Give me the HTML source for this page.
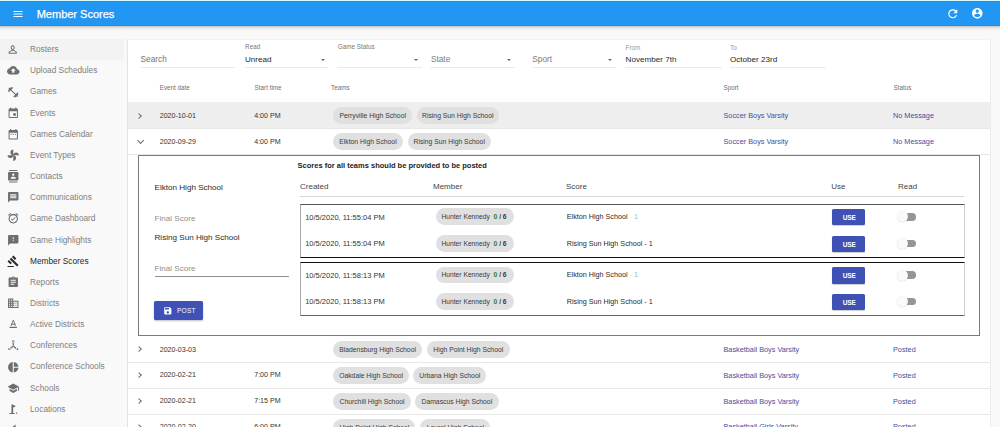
<!DOCTYPE html>
<html><head><meta charset="utf-8">
<style>
*{box-sizing:border-box;margin:0;padding:0}
html,body{width:1000px;height:427px;overflow:hidden;background:#f9f9f9;font-family:"Liberation Sans",sans-serif;position:relative}
.t{position:absolute;white-space:nowrap;line-height:1}
.abs{position:absolute}
#topline{position:absolute;left:0;top:0;width:1000px;height:1px;background:#d2fbff}
#topline2{position:absolute;left:0;top:1px;width:1000px;height:1px;background:#2f8ad6;z-index:6}
#bar{position:absolute;left:0;top:1px;width:1000px;height:25px;background:#2196f3;border-bottom:1px solid #2a89d2;z-index:5}
#shadow{position:absolute;left:0;top:26px;width:1000px;height:6px;background:linear-gradient(to bottom,rgba(0,0,0,.22),rgba(0,0,0,.1) 25%,rgba(0,0,0,.04) 50%,rgba(0,0,0,.01) 75%,rgba(0,0,0,0));z-index:5}
#side{position:absolute;left:0;top:26px;width:124px;height:401px;background:#f9f9f9}
.si{position:absolute;left:0;width:124px;height:21.15px}
.si .ic{position:absolute;left:7.3px;width:12.5px;height:12.5px}
.si .ic svg{width:100%;height:100%;fill:#6e6e6e;display:block}
.si span{}
#card{position:absolute;left:127px;top:39px;width:863.5px;height:400px;background:#fff;border-left:1px solid #e3e3e3;border-right:1px solid #ececec;border-top:1px solid #f3f3f3}
.uline{position:absolute;height:1px;background:#dcdcdc}
.arrow{position:absolute;width:0;height:0;border-left:2.75px solid transparent;border-right:2.75px solid transparent;border-top:2.75px solid #666}
.chip{position:absolute;height:17px;border-radius:8.5px;background:#e0e0e0;font-size:6.8px;line-height:17px;color:#3a3a3a;white-space:nowrap;text-align:center}
.chev{position:absolute;width:4.2px;height:4.2px;border-right:1.1px solid #6a6a6a;border-bottom:1.1px solid #6a6a6a}
</style></head><body>
<div id="topline"></div><div id="topline2"></div><div id="shadow"></div>
<div id="bar">
  <svg class="abs" style="left:11.5px;top:7px;width:12px;height:12px" viewBox="0 0 24 24"><path fill="#fff" d="M3 18h18v-2H3v2zm0-5h18v-2H3v2zm0-7v2h18V6H3z"/></svg>
  <div class="t" style="left:36.7px;top:8px;font-size:11px;color:#fff;-webkit-text-stroke:0.25px #fff">Member Scores</div>
  <svg class="abs" style="left:945.6px;top:5.7px;width:13.5px;height:13.5px" viewBox="0 0 24 24"><path fill="#fff" d="M17.65 6.35C16.2 4.9 14.21 4 12 4c-4.42 0-7.990 3.58-7.99 8s3.57 8 7.99 8c3.73 0 6.84-2.55 7.73-6h-2.08c-.82 2.33-3.04 4-5.65 4-3.31 0-6-2.69-6-6s2.69-6 6-6c1.66 0 3.14.69 4.22 1.78L13 11h7V4l-2.35 2.35z"/></svg>
  <svg class="abs" style="left:970.9px;top:5.8px;width:12.6px;height:12.6px" viewBox="0 0 24 24"><path fill="#fff" d="M12 2C6.48 2 2 6.48 2 12s4.48 10 10 10 10-4.48 10-10S17.52 2 12 2zm0 3c1.66 0 3 1.34 3 3s-1.34 3-3 3-3-1.34-3-3 1.34-3 3-3zm0 14.2c-2.5 0-4.71-1.280-6-3.22.03-1.99 4-3.08 6-3.08 1.99 0 5.970 1.09 6 3.08-1.29 1.94-3.5 3.22-6 3.22z"/></svg>
</div>
<div id="side">
<div class="si" style="top:12.50px;background:#f3f3f3;"><div class="ic" style="top:4.8px"><svg viewBox="0 0 24 24"><path fill-rule="evenodd" d="M11 4.3a3.9 4.5 0 1 0 0.001 0z M11 6.2a2.0 2.6 0 1 1 -0.001 0z M9 13.3H13L18.8 17V20.4H3.2V17Z M9.6 15.1L5 17.8V18.6H17V17.8L12.4 15.1Z"/></svg></div></div>
<div class="si" style="top:33.65px;"><div class="ic" style="top:4.8px"><svg viewBox="0 0 24 24"><path fill-rule="evenodd" d="M19.35 10.04C18.67 6.59 15.64 4 12 4 9.11 4 6.6 5.64 5.35 8.04 2.34 8.36 0 10.91 0 14c0 3.31 2.69 6 6 6h13c2.76 0 5-2.24 5-5 0-2.64-2.05-4.78-4.65-4.96zM14 13v4h-4v-4H7l5-5 5 5h-3z"/></svg></div></div>
<div class="si" style="top:54.80px;"><div class="ic" style="top:4.8px"><svg viewBox="0 0 24 24"><path fill-rule="evenodd" d="M20.57 14.86L22 13.43 20.57 12 17 15.57 8.43 7 12 3.43 10.57 2 9.14 3.43 7.71 2 5.57 4.14 4.14 2.71 2.71 4.14l1.43 1.43L2 7.71l1.43 1.43L2 10.57 3.43 12 7 8.43 15.57 17 12 20.57 13.43 22l1.43-1.43L16.29 22l2.14-2.14 1.43 1.43 1.43-1.43-1.43-1.43L22 16.29z"/></svg></div></div>
<div class="si" style="top:75.95px;"><div class="ic" style="top:4.8px"><svg viewBox="0 0 24 24"><path fill-rule="evenodd" d="M17 12h-5v5h5v-5zM16 1v2H8V1H6v2H5c-1.11 0-1.99.9-1.99 2L3 19c0 1.1.89 2 2 2h14c1.1 0 2-.9 2-2V5c0-1.1-.9-2-2-2h-1V1h-2zm3 18H5V8h14v11z"/></svg></div></div>
<div class="si" style="top:97.10px;"><div class="ic" style="top:4.8px"><svg viewBox="0 0 24 24"><path fill-rule="evenodd" d="M9 11H7v2h2v-2zm4 0h-2v2h2v-2zm4 0h-2v2h2v-2zm2-7h-1V2h-2v2H8V2H6v2H5c-1.11 0-1.99.9-1.99 2L3 20c0 1.1.89 2 2 2h14c1.1 0 2-.9 2-2V6c0-1.1-.9-2-2-2zm0 16H5V9h14v11z"/></svg></div></div>
<div class="si" style="top:118.25px;"><div class="ic" style="top:4.8px"><svg viewBox="0 0 24 24"><path fill-rule="evenodd" d="M12 12c0-3 2.5-5.5 5.5-5.5S23 9 23 12H12zm0 0c0 3-2.5 5.5-5.5 5.5S1 15 1 12h11zm0 0c-3 0-5.5-2.5-5.5-5.5S9 1 12 1v11zm0 0c3 0 5.5 2.5 5.5 5.5S15 23 12 23V12z"/></svg></div></div>
<div class="si" style="top:139.40px;"><div class="ic" style="top:4.8px"><svg viewBox="0 0 24 24"><path fill-rule="evenodd" d="M20 0H4v2h16V0zM4 24h16v-2H4v2zM20 4H4c-1.1 0-2 .9-2 2v12c0 1.1.9 2 2 2h16c1.1 0 2-.9 2-2V6c0-1.1-.9-2-2-2zm-8 2.75c1.24 0 2.25 1.01 2.25 2.25s-1.01 2.25-2.25 2.25S9.75 10.24 9.75 9 10.76 6.75 12 6.75zM17 17H7v-1.5c0-1.67 3.33-2.5 5-2.5s5 .83 5 2.5V17z"/></svg></div></div>
<div class="si" style="top:160.55px;"><div class="ic" style="top:4.8px"><svg viewBox="0 0 24 24"><path fill-rule="evenodd" d="M20 2H4c-1.1 0-1.99.9-1.99 2L2 22l4-4h14c1.1 0 2-.9 2-2V4c0-1.1-.9-2-2-2zm-2 12H6v-2h12v2zm0-3H6V9h12v2zm0-3H6V6h12v2z"/></svg></div></div>
<div class="si" style="top:181.70px;"><div class="ic" style="top:4.8px"><svg viewBox="0 0 24 24"><path fill-rule="evenodd" d="M22 5.72l-4.6-3.86-1.29 1.53 4.6 3.86L22 5.72zM7.88 3.39L6.6 1.86 2 5.71l1.29 1.53 4.59-3.85zM12 4c-4.97 0-9 4.03-9 9s4.02 9 9 9c4.97 0 9-4.03 9-9s-4.03-9-9-9zm0 16c-3.87 0-7-3.13-7-7s3.13-7 7-7 7 3.13 7 7-3.13 7-7 7zm-1.46-5.47L8.41 12.4l-1.06 1.06 3.18 3.18 6-6-1.06-1.06-4.93 4.95z"/></svg></div></div>
<div class="si" style="top:202.85px;"><div class="ic" style="top:4.8px"><svg viewBox="0 0 24 24"><path fill-rule="evenodd" d="M20 2H4c-1.1 0-1.99.9-1.99 2L2 22l4-4h14c1.1 0 2-.9 2-2V4c0-1.1-.9-2-2-2zm-7 12h-2v-2h2v2zm0-4h-2V6h2v4z"/></svg></div></div>
<div class="si" style="top:224.00px;"><div class="ic" style="top:4.8px"><svg viewBox="0 0 24 24" style="fill:#2a2a2a"><path fill-rule="evenodd" d="M1 21h12v2H1zM5.245 8.07l2.83-2.827 14.14 14.142-2.828 2.828zM12.317 1l5.657 5.656-2.83 2.83-5.654-5.66zM3.825 9.485l5.657 5.657-2.828 2.828-5.657-5.657z"/></svg></div></div>
<div class="si" style="top:245.15px;"><div class="ic" style="top:4.8px"><svg viewBox="0 0 24 24"><path fill-rule="evenodd" d="M19 3h-4.18C14.4 1.84 13.3 1 12 1c-1.3 0-2.4.84-2.82 2H5c-1.1 0-2 .9-2 2v14c0 1.1.9 2 2 2h14c1.1 0 2-.9 2-2V5c0-1.1-.9-2-2-2zm-7 0c.55 0 1 .45 1 1s-.45 1-1 1-1-.45-1-1 .45-1 1-1zm2 14H7v-2h7v2zm3-4H7v-2h10v2zm0-4H7V7h10v2z"/></svg></div></div>
<div class="si" style="top:266.30px;"><div class="ic" style="top:4.8px"><svg viewBox="0 0 24 24"><path fill-rule="evenodd" d="M12 7V3H2v18h20V7H12zM6 19H4v-2h2v2zm0-4H4v-2h2v2zm0-4H4V9h2v2zm0-4H4V5h2v2zm4 12H8v-2h2v2zm0-4H8v-2h2v2zm0-4H8V9h2v2zm0-4H8V5h2v2zm10 12h-8v-2h2v-2h-2v-2h2v-2h-2V9h8v10zm-2-8h-2v2h2v-2zm0 4h-2v2h2v-2z"/></svg></div></div>
<div class="si" style="top:287.45px;"><div class="ic" style="top:4.8px"><svg viewBox="0 0 24 24"><path fill-rule="evenodd" d="M5 17v2h14v-2H5zm4.5-4.2h5l.9 2.2h2.1L12.75 4h-1.5L6.5 15h2.1l.9-2.2zM12 5.98L13.87 11h-3.74L12 5.98z"/></svg></div></div>
<div class="si" style="top:308.60px;"><div class="ic" style="top:4.8px"><svg viewBox="0 0 24 24"><path fill-rule="evenodd" d="M10.8 5h2.4v8.5h-2.4z M11.2 12.4l1.6 1.8-7.4 6.2-1.6-1.8z M12.8 12.4l-1.6 1.8 7.4 6.2 1.6-1.8z M2.6 17.2h4.2v4h-4.2z M17.2 17.2h4.2v4h-4.2z M9.9 3h4.2v4h-4.2z"/></svg></div></div>
<div class="si" style="top:329.75px;"><div class="ic" style="top:4.8px"><svg viewBox="0 0 24 24"><path fill-rule="evenodd" d="M11 2v20c-5.07-.5-9-4.79-9-10s3.93-9.5 9-10zm2.03 0v8.99H22c-.47-4.74-4.24-8.52-8.97-8.99zm0 11.01V22c4.74-.47 8.5-4.25 8.97-8.99h-8.97z"/></svg></div></div>
<div class="si" style="top:350.90px;"><div class="ic" style="top:4.8px"><svg viewBox="0 0 24 24"><path fill-rule="evenodd" d="M5 13.18v4L12 21l7-3.82v-4L12 17l-7-3.82zM12 3L1 9l11 6 9-4.91V17h2V9L12 3z"/></svg></div></div>
<div class="si" style="top:372.05px;"><div class="ic" style="top:4.8px"><svg viewBox="0 0 24 24"><path fill-rule="evenodd" d="M8.5 3h2.6l6 3-5.2 2.6V19h-3.4z M4.5 19h10v2.2h-10z M17.2 18.3h2.4v2.4h-2.4z"/></svg></div></div>
<div class="si" style="top:393.20px;"><div class="ic" style="top:4.8px"><svg viewBox="0 0 24 24"><path fill-rule="evenodd" d="M11 5.5l5.5-4.5v6h-5.5z"/></svg></div></div>
</div>
<div id="card"></div>
<div class="t" style="left:30px;top:45px;font-size:8.3px;color:#808080;">Rosters</div>
<div class="t" style="left:30px;top:66px;font-size:8.3px;color:#808080;">Upload Schedules</div>
<div class="t" style="left:30px;top:87px;font-size:8.3px;color:#808080;">Games</div>
<div class="t" style="left:30px;top:109px;font-size:8.3px;color:#808080;">Events</div>
<div class="t" style="left:30px;top:130px;font-size:8.3px;color:#808080;">Games Calendar</div>
<div class="t" style="left:30px;top:151px;font-size:8.3px;color:#808080;">Event Types</div>
<div class="t" style="left:30px;top:172px;font-size:8.3px;color:#808080;">Contacts</div>
<div class="t" style="left:30px;top:193px;font-size:8.3px;color:#808080;">Communications</div>
<div class="t" style="left:30px;top:214px;font-size:8.3px;color:#808080;">Game Dashboard</div>
<div class="t" style="left:30px;top:236px;font-size:8.3px;color:#808080;">Game Highlights</div>
<div class="t" style="left:30px;top:257px;font-size:8.3px;color:#262626;">Member Scores</div>
<div class="t" style="left:30px;top:278px;font-size:8.3px;color:#808080;">Reports</div>
<div class="t" style="left:30px;top:299px;font-size:8.3px;color:#808080;">Districts</div>
<div class="t" style="left:30px;top:320px;font-size:8.3px;color:#808080;">Active Districts</div>
<div class="t" style="left:30px;top:341px;font-size:8.3px;color:#808080;">Conferences</div>
<div class="t" style="left:30px;top:362px;font-size:8.3px;color:#808080;">Conference Schools</div>
<div class="t" style="left:30px;top:384px;font-size:8.3px;color:#808080;">Schools</div>
<div class="t" style="left:30px;top:405px;font-size:8.3px;color:#808080;">Locations</div>
<div class="t" style="left:140.5px;top:55px;font-size:8.3px;color:#737373;">Search</div>
<div class="abs" style="left:140px;top:67px;width:95.0px;height:1px;background:#ebebeb"></div>
<div class="t" style="left:245.1px;top:44px;font-size:6.3px;color:#777;">Read</div>
<div class="t" style="left:245px;top:56px;font-size:8.1px;color:#262626;">Unread</div>
<div class="arrow" style="left:321.15px;top:59.20px"></div>
<div class="abs" style="left:245px;top:67px;width:82.5px;height:1px;background:#ebebeb"></div>
<div class="t" style="left:337.8px;top:44px;font-size:6.3px;color:#777;">Game Status</div>
<div class="arrow" style="left:414.25px;top:59.20px"></div>
<div class="abs" style="left:337px;top:67px;width:85.0px;height:1px;background:#ebebeb"></div>
<div class="t" style="left:430.9px;top:55px;font-size:8.3px;color:#7c7c7c;">State</div>
<div class="arrow" style="left:507.05px;top:59.20px"></div>
<div class="abs" style="left:430px;top:67px;width:84.6px;height:1px;background:#ebebeb"></div>
<div class="t" style="left:532.3px;top:55px;font-size:8.3px;color:#7c7c7c;">Sport</div>
<div class="arrow" style="left:607.95px;top:59.20px"></div>
<div class="abs" style="left:532px;top:67px;width:83.5px;height:1px;background:#ebebeb"></div>
<div class="t" style="left:625.6px;top:45px;font-size:6.3px;color:#999;">From</div>
<div class="t" style="left:625.6px;top:56px;font-size:8.1px;color:#262a3a;">November 7th</div>
<div class="abs" style="left:625px;top:67px;width:96.5px;height:1px;background:#ebebeb"></div>
<div class="t" style="left:730px;top:45px;font-size:6.3px;color:#999;">To</div>
<div class="t" style="left:730px;top:56px;font-size:8.1px;color:#262626;">October 23rd</div>
<div class="abs" style="left:730px;top:67px;width:96.0px;height:1px;background:#ebebeb"></div>
<div class="t" style="left:159.7px;top:85px;font-size:6.3px;color:#707070;">Event date</div>
<div class="t" style="left:254.6px;top:85px;font-size:6.3px;color:#707070;">Start time</div>
<div class="t" style="left:331.1px;top:85px;font-size:6.3px;color:#707070;">Teams</div>
<div class="t" style="left:723.5px;top:85px;font-size:6.3px;color:#707070;">Sport</div>
<div class="t" style="left:893.5px;top:85px;font-size:6.3px;color:#707070;">Status</div>
<div class="abs" style="left:127.5px;top:102px;width:862.5px;height:26px;background:#eeeeee"></div>
<div class="chev" style="left:137.2px;top:114.05px;transform:rotate(-45deg)"></div>
<div class="t" style="left:159.7px;top:113px;font-size:7.1px;color:#333;">2020-10-01</div>
<div class="t" style="left:254.2px;top:113px;font-size:7.1px;color:#333;">4:00 PM</div>
<div class="chip" style="left:333.1px;top:107.20px;width:79.2px">Perryville High School</div>
<div class="chip" style="left:416.8px;top:107.20px;width:81.9px">Rising Sun High School</div>
<div class="t" style="left:723.5px;top:112px;font-size:7.3px;color:#4350a0;">Soccer Boys Varsity</div>
<div class="t" style="left:893px;top:112px;font-size:7.3px;color:#4350a0;">No Message</div>
<div class="abs" style="left:127.5px;top:128px;width:862.5px;height:1px;background:#e8e8e8"></div>
<div class="chev" style="left:137.75px;top:138.30px;width:5.2px;height:5.2px;transform:rotate(45deg)"></div>
<div class="t" style="left:159.7px;top:139px;font-size:7.1px;color:#333;">2020-09-29</div>
<div class="t" style="left:254.2px;top:139px;font-size:7.1px;color:#333;">4:00 PM</div>
<div class="chip" style="left:333.1px;top:133.25px;width:69.7px">Elkton High School</div>
<div class="chip" style="left:407.8px;top:133.25px;width:82.8px">Rising Sun High School</div>
<div class="t" style="left:723.5px;top:138px;font-size:7.3px;color:#4350a0;">Soccer Boys Varsity</div>
<div class="t" style="left:893px;top:138px;font-size:7.3px;color:#4350a0;">No Message</div>
<div class="abs" style="left:127.5px;top:154px;width:862.5px;height:1px;background:#e8e8e8"></div>
<div class="chev" style="left:137.2px;top:347.25px;transform:rotate(-45deg)"></div>
<div class="t" style="left:159.7px;top:347px;font-size:7.1px;color:#333;">2020-03-03</div>
<div class="chip" style="left:333.2px;top:341.00px;width:88.8px">Bladensburg High School</div>
<div class="chip" style="left:426.7px;top:341.00px;width:83.2px">High Point High School</div>
<div class="t" style="left:723.5px;top:346px;font-size:7.3px;color:#4350a0;">Basketball Boys Varsity</div>
<div class="t" style="left:893px;top:346px;font-size:7.3px;color:#4350a0;">Posted</div>
<div class="abs" style="left:127.5px;top:362px;width:862.5px;height:1px;background:#e8e8e8"></div>
<div class="chev" style="left:137.2px;top:373.15px;transform:rotate(-45deg)"></div>
<div class="t" style="left:159.7px;top:372px;font-size:7.1px;color:#333;">2020-02-21</div>
<div class="t" style="left:254.2px;top:372px;font-size:7.1px;color:#333;">7:00 PM</div>
<div class="chip" style="left:333.2px;top:367.10px;width:75.8px">Oakdale High School</div>
<div class="chip" style="left:413.4px;top:367.10px;width:72.8px">Urbana High School</div>
<div class="t" style="left:723.5px;top:372px;font-size:7.3px;color:#4350a0;">Basketball Boys Varsity</div>
<div class="t" style="left:893px;top:372px;font-size:7.3px;color:#4350a0;">Posted</div>
<div class="abs" style="left:127.5px;top:388.3px;width:862.5px;height:1px;background:#e8e8e8"></div>
<div class="chev" style="left:137.2px;top:399.15px;transform:rotate(-45deg)"></div>
<div class="t" style="left:159.7px;top:398px;font-size:7.1px;color:#333;">2020-02-21</div>
<div class="t" style="left:254.2px;top:398px;font-size:7.1px;color:#333;">7:15 PM</div>
<div class="chip" style="left:333.2px;top:393.20px;width:77.6px">Churchill High School</div>
<div class="chip" style="left:415px;top:393.20px;width:83.7px">Damascus High School</div>
<div class="t" style="left:723.5px;top:398px;font-size:7.3px;color:#4350a0;">Basketball Boys Varsity</div>
<div class="t" style="left:893px;top:398px;font-size:7.3px;color:#4350a0;">Posted</div>
<div class="abs" style="left:127.5px;top:414.3px;width:862.5px;height:1px;background:#e8e8e8"></div>
<div class="chev" style="left:137.2px;top:425.05px;transform:rotate(-45deg)"></div>
<div class="t" style="left:159.7px;top:424px;font-size:7.1px;color:#333;">2020-02-20</div>
<div class="t" style="left:254.2px;top:424px;font-size:7.1px;color:#333;">6:00 PM</div>
<div class="chip" style="left:333.2px;top:419.10px;width:82.3px">High Point High School</div>
<div class="chip" style="left:420.3px;top:419.10px;width:70.2px">Laurel High School</div>
<div class="t" style="left:723.5px;top:423px;font-size:7.3px;color:#4350a0;">Basketball Girls Varsity</div>
<div class="t" style="left:893px;top:423px;font-size:7.3px;color:#4350a0;">Posted</div>
<div class="abs" style="left:127.5px;top:440.3px;width:862.5px;height:1px;background:#e8e8e8"></div>
<div class="abs" style="left:138px;top:155px;width:842px;height:181px;border:1px solid #7a7a7a;background:#fff"></div>
<div class="t" style="left:297.6px;top:162px;font-size:7.5px;color:#222;font-weight:bold">Scores for all teams should be provided to be posted</div>
<div class="t" style="left:300px;top:183px;font-size:8px;color:#444;">Created</div>
<div class="t" style="left:433px;top:183px;font-size:8px;color:#444;">Member</div>
<div class="t" style="left:566px;top:183px;font-size:8px;color:#444;">Score</div>
<div class="t" style="left:831.3px;top:183px;font-size:8px;color:#444;">Use</div>
<div class="t" style="left:898px;top:183px;font-size:8px;color:#444;">Read</div>
<div class="abs" style="left:300px;top:196px;width:664.0px;height:1px;background:#d6d6d6"></div>
<div class="abs" style="left:300px;top:204px;width:665px;height:54px;border:1px solid #a8a8a8;border-right-color:#d0d0d0;border-top-color:#555;border-bottom-color:#111"></div>
<div class="abs" style="left:300px;top:262px;width:665px;height:54px;border:1px solid #a8a8a8;border-right-color:#d0d0d0;border-top-color:#111;border-bottom-color:#666"></div>
<div class="t" style="left:305.2px;top:214px;font-size:7.5px;color:#333;">10/5/2020, 11:55:04 PM</div>
<div class="chip" style="left:435.7px;top:208.25px;width:78.2px;height:16.7px;line-height:16.7px;padding:0 0 0 5.8px;font-size:6.7px;text-align:left"><span style="position:relative;top:0.5px">Hunter Kennedy&nbsp; <b style="color:#2e7d32">0</b><b> / 6</b></span></div>
<div class="t" style="left:566.8px;top:213px;font-size:7.2px;color:#2a2a2a;">Elkton High School <span style="color:#e6e6e6">-</span> <span style="color:#9bbcbc">1</span></div>
<div class="abs" style="left:832px;top:208.90px;width:33px;height:16.5px;background:#3f51b5;border-radius:1.5px;box-shadow:0 1px 1px rgba(0,0,0,.2);color:#fff;font-size:6.5px;font-weight:bold;text-align:center;line-height:17.5px;padding-left:1.5px;letter-spacing:-0.1px">USE</div>
<div class="abs" style="left:902px;top:213.00px;width:13.8px;height:7.6px;border-radius:3.8px;background:#959595"></div>
<div class="abs" style="left:897.2px;top:211.30px;width:11px;height:11px;border-radius:50%;background:#fafafa;box-shadow:0 0.3px 1px rgba(0,0,0,.22)"></div>
<div class="t" style="left:305.2px;top:240px;font-size:7.5px;color:#333;">10/5/2020, 11:55:04 PM</div>
<div class="chip" style="left:435.7px;top:235.05px;width:78.2px;height:16.7px;line-height:16.7px;padding:0 0 0 5.8px;font-size:6.7px;text-align:left"><span style="position:relative;top:0.5px">Hunter Kennedy&nbsp; <b style="color:#2e7d32">0</b><b> / 6</b></span></div>
<div class="t" style="left:566.8px;top:240px;font-size:7.2px;color:#2a2a2a;">Rising Sun High School - 1</div>
<div class="abs" style="left:832px;top:235.70px;width:33px;height:16.5px;background:#3f51b5;border-radius:1.5px;box-shadow:0 1px 1px rgba(0,0,0,.2);color:#fff;font-size:6.5px;font-weight:bold;text-align:center;line-height:17.5px;padding-left:1.5px;letter-spacing:-0.1px">USE</div>
<div class="abs" style="left:902px;top:239.80px;width:13.8px;height:7.6px;border-radius:3.8px;background:#959595"></div>
<div class="abs" style="left:897.2px;top:238.10px;width:11px;height:11px;border-radius:50%;background:#fafafa;box-shadow:0 0.3px 1px rgba(0,0,0,.22)"></div>
<div class="t" style="left:305.2px;top:272px;font-size:7.5px;color:#333;">10/5/2020, 11:58:13 PM</div>
<div class="chip" style="left:435.7px;top:266.55px;width:78.2px;height:16.7px;line-height:16.7px;padding:0 0 0 5.8px;font-size:6.7px;text-align:left"><span style="position:relative;top:0.5px">Hunter Kennedy&nbsp; <b style="color:#2e7d32">0</b><b> / 6</b></span></div>
<div class="t" style="left:566.8px;top:271px;font-size:7.2px;color:#2a2a2a;">Elkton High School <span style="color:#e6e6e6">-</span> <span style="color:#9bbcbc">1</span></div>
<div class="abs" style="left:832px;top:267.20px;width:33px;height:16.5px;background:#3f51b5;border-radius:1.5px;box-shadow:0 1px 1px rgba(0,0,0,.2);color:#fff;font-size:6.5px;font-weight:bold;text-align:center;line-height:17.5px;padding-left:1.5px;letter-spacing:-0.1px">USE</div>
<div class="abs" style="left:902px;top:271.30px;width:13.8px;height:7.6px;border-radius:3.8px;background:#959595"></div>
<div class="abs" style="left:897.2px;top:269.60px;width:11px;height:11px;border-radius:50%;background:#fafafa;box-shadow:0 0.3px 1px rgba(0,0,0,.22)"></div>
<div class="t" style="left:305.2px;top:298px;font-size:7.5px;color:#333;">10/5/2020, 11:58:13 PM</div>
<div class="chip" style="left:435.7px;top:293.05px;width:78.2px;height:16.7px;line-height:16.7px;padding:0 0 0 5.8px;font-size:6.7px;text-align:left"><span style="position:relative;top:0.5px">Hunter Kennedy&nbsp; <b style="color:#2e7d32">0</b><b> / 6</b></span></div>
<div class="t" style="left:566.8px;top:298px;font-size:7.2px;color:#2a2a2a;">Rising Sun High School - 1</div>
<div class="abs" style="left:832px;top:293.70px;width:33px;height:16.5px;background:#3f51b5;border-radius:1.5px;box-shadow:0 1px 1px rgba(0,0,0,.2);color:#fff;font-size:6.5px;font-weight:bold;text-align:center;line-height:17.5px;padding-left:1.5px;letter-spacing:-0.1px">USE</div>
<div class="abs" style="left:902px;top:297.80px;width:13.8px;height:7.6px;border-radius:3.8px;background:#959595"></div>
<div class="abs" style="left:897.2px;top:296.10px;width:11px;height:11px;border-radius:50%;background:#fafafa;box-shadow:0 0.3px 1px rgba(0,0,0,.22)"></div>
<div class="t" style="left:154.5px;top:184px;font-size:8.1px;color:#2a2a2a;">Elkton High School</div>
<div class="t" style="left:154.5px;top:215px;font-size:8.1px;color:#8f8f8f;">Final Score</div>
<div class="t" style="left:154.5px;top:234px;font-size:8.1px;color:#2a2a2a;">Rising Sun High School</div>
<div class="t" style="left:154.5px;top:265px;font-size:8.1px;color:#8f8f8f;">Final Score</div>
<div class="abs" style="left:154.5px;top:276px;width:134.5px;height:1px;background:#8f8f8f"></div>
<div class="abs" style="left:154.2px;top:301.2px;width:48.6px;height:18.8px;background:#3f51b5;border-radius:1.5px;box-shadow:0 1px 2px rgba(0,0,0,.25)"></div>
<svg class="abs" style="left:162.6px;top:306px;width:9.6px;height:9.6px" viewBox="0 0 24 24"><path fill="#fff" d="M17 3H5c-1.11 0-2 .9-2 2v14c0 1.1.89 2 2 2h14c1.1 0 2-.9 2-2V7l-4-4zm-5 16c-1.66 0-3-1.34-3-3s1.34-3 3-3 3 1.34 3 3-1.34 3-3 3zm3-10H5V5h10v4z"/></svg>
<div class="t" style="left:177px;top:308px;font-size:6.6px;color:#fff;letter-spacing:.2px">POST</div>
</body></html>
